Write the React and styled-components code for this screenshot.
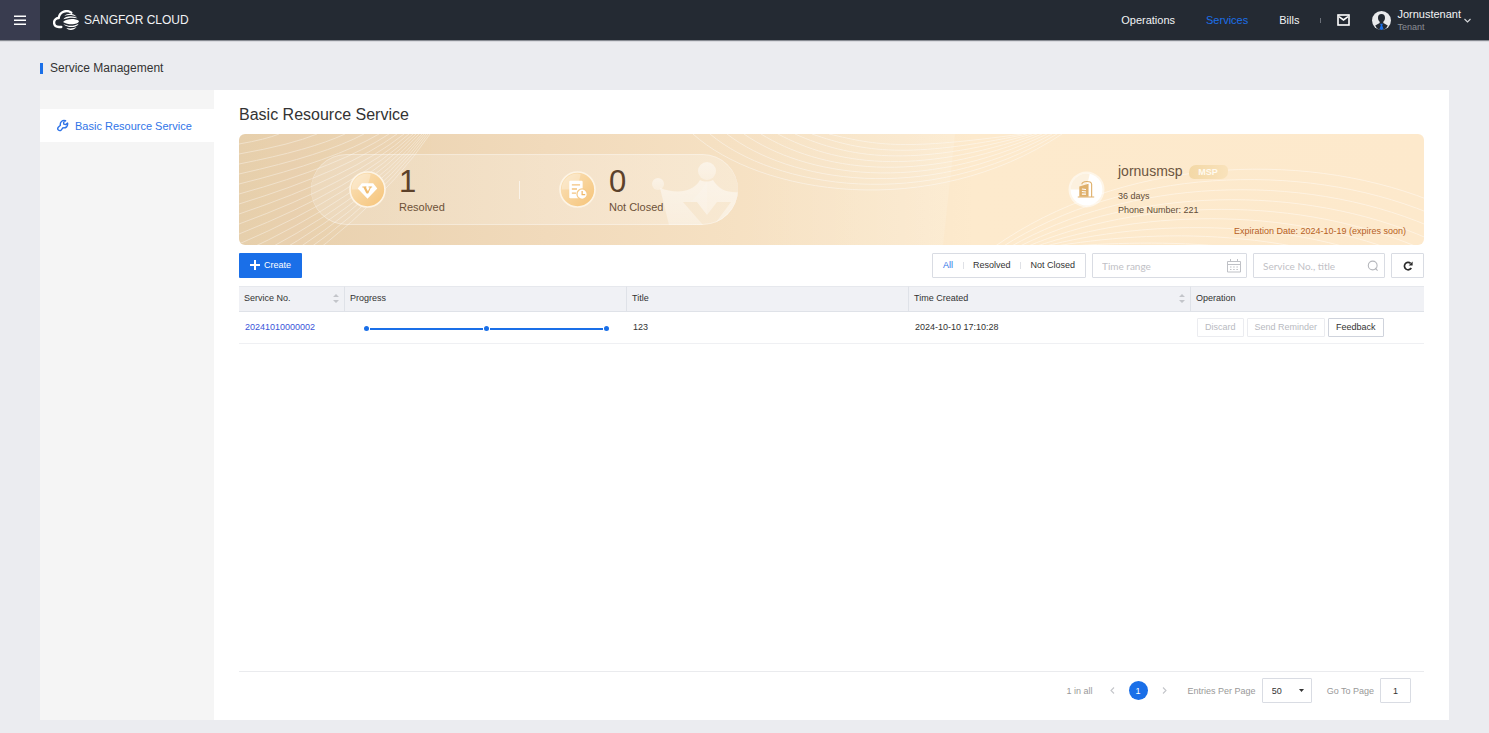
import React from "react";
import styled, { createGlobalStyle } from "styled-components";

const GlobalStyle = createGlobalStyle`
  *, *::before, *::after { box-sizing: border-box; }
  html, body { margin: 0; padding: 0; }
  body {
    background: #ebecf0;
    color: #333;
    font-family: "Liberation Sans", Arial, sans-serif;
    font-size: 9px;
  }
  button, input, select { font-family: inherit; font-size: inherit; margin: 0; }
`;

const Page = styled.div`
  min-height: 100vh;
  display: flex;
  flex-direction: column;
`;

/* ---------- header ---------- */

const Header = styled.header`
  height: 40px;
  flex: none;
  display: flex;
  align-items: center;
  background: #242a33;
  box-shadow: 0 1px 1px rgba(36, 42, 51, 0.5);
`;

const MenuButton = styled.button`
  width: 40px;
  height: 40px;
  display: flex;
  align-items: center;
  justify-content: center;
  padding: 0;
  border: 0;
  background: #393c4f;
`;

const Brand = styled.a`
  display: flex;
  align-items: center;
  gap: 5px;
  margin-left: 13px;
  color: #f2f3f5;
  font-size: 12px;
  line-height: 16px;
  text-decoration: none;
`;

const Nav = styled.nav`
  display: flex;
  align-items: center;
  gap: 31px;
  margin-left: auto;
`;

const NavLink = styled.a`
  color: ${(p) => (p.$active ? "#1c6fe8" : "#f2f3f5")};
  font-size: 11px;
  line-height: 16px;
  text-decoration: none;
`;

const NavDivider = styled.span`
  width: 1px;
  height: 5px;
  margin: 0 16px 0 21px;
  background: #6b7079;
`;

const IconButton = styled.button`
  display: flex;
  padding: 0;
  border: 0;
  background: none;
  color: inherit;
`;

const UserButton = styled.button`
  display: flex;
  align-items: center;
  gap: 6px;
  margin: 0 18px 0 22px;
  padding: 0;
  border: 0;
  background: none;
  text-align: left;
`;

const UserText = styled.span`
  display: flex;
  flex-direction: column;
  margin-right: -3px;
`;

const UserName = styled.span`
  color: #f2f3f5;
  font-size: 11px;
  line-height: 13px;
`;

const UserRole = styled.span`
  color: #8b8e94;
  font-size: 9px;
  line-height: 12px;
`;

/* ---------- page frame ---------- */

const PageTitle = styled.h1`
  display: flex;
  align-items: center;
  gap: 7px;
  height: 50px;
  margin: 0 40px;
  padding-top: 6px;
  color: #333;
  font-size: 12px;
  font-weight: 400;

  &::before {
    content: "";
    width: 3px;
    height: 11px;
    background: #1a6fe8;
  }
`;

const Panel = styled.div`
  flex: 1;
  display: flex;
  margin: 0 40px 13px;
  background: #fff;
`;

const Sidebar = styled.aside`
  flex: none;
  width: 174px;
  padding-top: 19px;
  background: #f5f5f5;
`;

const SideLink = styled.a`
  display: flex;
  align-items: center;
  gap: 6px;
  height: 33px;
  padding-left: 16px;
  background: #fff;
  color: #2f74e8;
  font-size: 11px;
  text-decoration: none;
`;

const Content = styled.main`
  flex: 1;
  min-width: 0;
  display: flex;
  flex-direction: column;
  padding: 16px 25px 17px;
`;

const Heading = styled.h2`
  margin: 0 0 10px;
  color: #333;
  font-size: 16px;
  font-weight: 400;
  line-height: 18px;
`;

/* ---------- banner ---------- */

const Banner = styled.section`
  position: relative;
  flex: none;
  display: flex;
  align-items: center;
  justify-content: space-between;
  height: 111px;
  padding-left: 72px;
  overflow: hidden;
  border-radius: 6px;
  background: linear-gradient(90deg, #e7cfac 0%, #f1dabb 26%, #fae7ca 56%, #fdeacd 62%, #fde9cc 100%);
`;

const BannerArt = styled.svg`
  position: absolute;
  inset: 0;
  width: 100%;
  height: 100%;
`;

const StatPill = styled.div`
  position: relative;
  display: flex;
  align-items: center;
  width: 427px;
  height: 71px;
  padding-left: 38px;
  overflow: hidden;
  border-radius: 36px;
  background: linear-gradient(90deg, rgba(255, 255, 255, 0.16), rgba(255, 255, 255, 0.26));
  box-shadow: inset 0 1px 0 rgba(255, 255, 255, 0.35), inset 0 -1px 0 rgba(255, 255, 255, 0.35);
`;

const Crown = styled.svg`
  position: absolute;
  right: 0;
  bottom: 0;
`;

const Stat = styled.div`
  position: relative;
  flex: none;
  display: flex;
  align-items: center;
  gap: 13px;
  width: 170px;
`;

const StatDivider = styled.span`
  flex: none;
  width: 1px;
  height: 18px;
  margin-right: 39px;
  background: rgba(255, 255, 255, 0.6);
`;

const StatText = styled.div`
  display: flex;
  flex-direction: column;
  color: #6d5138;
  font-size: 11px;
  line-height: 14px;
  padding-bottom: 3px;
`;

const StatValue = styled.strong`
  color: #5c412a;
  font-size: 31px;
  font-weight: 400;
  line-height: 37px;
`;

const Provider = styled.div`
  position: relative;
  display: flex;
  align-self: stretch;
  gap: 13px;
  width: 356px;
  padding: 29px 18px 8px 0;
`;

const ProviderIcon = styled.svg`
  flex: none;
  margin-top: 8px;
`;

const ProviderInfo = styled.div`
  flex: 1;
  display: flex;
  flex-direction: column;
  color: #5f4c38;
  line-height: 14px;
`;

const ProviderName = styled.div`
  display: flex;
  align-items: center;
  gap: 6px;
  margin-bottom: 9px;
  color: #6b5540;
  font-size: 14px;
  line-height: 17px;
`;

const Tag = styled.span`
  width: 39px;
  height: 14px;
  border-radius: 7px 5px 7px 5px;
  background: linear-gradient(90deg, #f3d8a6, #f9e2bb);
  color: #fffaf0;
  font-size: 9px;
  font-weight: 700;
  line-height: 14px;
  text-align: center;
`;

const Expiry = styled.div`
  margin-top: auto;
  color: #b5601f;
  line-height: 12px;
  text-align: right;
`;

/* ---------- toolbar ---------- */

const Toolbar = styled.div`
  display: flex;
  gap: 6px;
  margin: 8px 0;
`;

const CreateButton = styled.button`
  display: flex;
  align-items: center;
  justify-content: center;
  gap: 4px;
  width: 63px;
  height: 25px;
  margin-right: auto;
  padding: 0 0 1px;
  border: 0;
  border-radius: 1px;
  background: #1a6fe8;
  color: #fff;
`;

const FilterGroup = styled.div`
  display: flex;
  align-items: center;
  height: 25px;
  padding-bottom: 1px;
  border: 1px solid #d9dce3;
  border-radius: 1px;
`;

const FilterButton = styled.button`
  padding: 0 10px;
  border: 0;
  background: none;
  color: ${(p) => (p.$active ? "#2f74e8" : "#333")};
  line-height: 12px;

  & + & {
    background: linear-gradient(#dfe1e6, #dfe1e6) left center / 1px 7px no-repeat;
  }
`;

const Field = styled.label`
  display: flex;
  align-items: center;
  width: ${(p) => p.$width}px;
  height: 25px;
  padding: 0 5px 0 9px;
  border: 1px solid #d9dce3;
  border-radius: 1px;
`;

const FieldInput = styled.input`
  flex: 1;
  min-width: 0;
  padding: 0;
  border: 0;
  outline: 0;
  background: none;
  font-family: Lato, "Liberation Sans", sans-serif;
  font-size: 10px;

  &::placeholder { color: #bfc1c6; opacity: 1; }
`;

const RefreshButton = styled.button`
  display: flex;
  align-items: center;
  justify-content: center;
  width: 33px;
  height: 25px;
  padding: 0;
  border: 1px solid #d9dce3;
  border-radius: 1px;
  background: #fff;
`;

/* ---------- table ---------- */

const Table = styled.table`
  width: 100%;
  border-collapse: separate;
  border-spacing: 0;
  table-layout: fixed;
  color: #333;
`;

const Col = styled.col`
  width: ${(p) => (p.$width ? `${p.$width}px` : "auto")};
`;

const Th = styled.th`
  height: 26px;
  padding: 0 5px 2px;
  border-top: 1px solid #e6e8ed;
  border-bottom: 1px solid #dfe2e8;
  border-right: 1px solid #dfe2e8;
  background: #f0f1f5;
  font-weight: 400;
  text-align: left;

  &:last-child { border-right: 0; }
`;

const ThInner = styled.div`
  display: flex;
  align-items: center;
  justify-content: space-between;
`;

const Td = styled.td`
  height: 32px;
  padding: 0 6px 1px;
  border-bottom: 1px solid #eff0f3;
`;

const ServiceLink = styled.a`
  color: #3a55d9;
  text-decoration: none;
`;

const Progress = styled.div`
  display: flex;
  align-items: center;
  gap: 1px;
  padding: 3px 12px 0 13px;
`;

const Dot = styled.span`
  width: 5px;
  height: 5px;
  border-radius: 50%;
  background: #1a6fe8;
`;

const Line = styled.span`
  flex: 1;
  height: 2px;
  margin-top: 1px;
  background: #1a6fe8;
`;

const RowActions = styled.div`
  display: flex;
  gap: 3px;
`;

const RowButton = styled.button`
  height: 19px;
  padding: 0 7px;
  border: 1px solid #cfd3dc;
  border-radius: 1px;
  background: #fff;
  color: #333;
  line-height: 12px;
  white-space: nowrap;

  &:disabled { border-color: #ebecf0; color: #b8babf; }
`;

/* ---------- pagination ---------- */

const Pager = styled.footer`
  display: flex;
  align-items: center;
  justify-content: flex-end;
  margin-top: auto;
  padding: 6px 13px 0 0;
  border-top: 1px solid #eaebee;
  color: #999;
`;

const PageArrow = styled.button`
  display: flex;
  padding: 0;
  border: 0;
  background: none;
`;

const PageNumber = styled.button`
  width: 19px;
  height: 19px;
  margin: 0 13px;
  padding: 0;
  border: 0;
  border-radius: 50%;
  background: #1a6fe8;
  color: #fff;
`;

const Total = styled.span`
  margin-right: 16px;
`;

const PagerLabel = styled.label`
  display: flex;
  align-items: center;
  gap: 6px;
  margin-left: ${(p) => p.$space}px;
`;

const SelectBox = styled.span`
  position: relative;
  display: flex;
  align-items: center;

  & > svg { position: absolute; right: 8px; pointer-events: none; }
`;

const PageSize = styled.select`
  appearance: none;
  width: 50px;
  height: 25px;
  padding: 0 9px;
  border: 1px solid #d9dce3;
  border-radius: 1px;
  background: #fff;
  color: #333;
`;

const PageInput = styled.input`
  width: 31px;
  height: 25px;
  padding: 0;
  border: 1px solid #d9dce3;
  border-radius: 1px;
  color: #333;
  text-align: center;
`;

/* ---------- icons ---------- */

const MenuIcon = () => (
  <svg width="12" height="11" viewBox="0 0 12 11" stroke="#fff" strokeWidth="1.5">
    <path d="M0 1.2h12M0 5.2h12M0 9.2h12" />
  </svg>
);

const Logo = () => (
  <svg width="26" height="20" viewBox="0 0 78 60" fill="none">
    <path
      d="M25 51H18C-2 50-1 25 17 24C20 4 42-2 55 8"
      stroke="#fff"
      strokeWidth="7"
      strokeLinecap="round"
    />
    <path d="M34 18C43 8 62 9 71 20C60 15 45 13 34 18Z" fill="#fff" />
    <path d="M31 28C37 17 62 16 74 25C62 22 46 22 31 28Z" fill="#fff" />
    <path d="M30 36C43 25 66 25 78 33C76 44 47 47 30 36Z" fill="#fff" />
    <path d="M31 42C46 50 65 48 77 41C72 53 44 56 31 42Z" fill="#fff" />
    <path d="M40 54C52 57 63 55 71 51C62 62 47 62 40 54Z" fill="#fff" />
  </svg>
);

const WrenchIcon = () => (
  <svg width="13" height="13" viewBox="0 0 13 13" fill="none" stroke="currentColor" strokeWidth="1.4" strokeLinejoin="round">
    <path d="M9.600 1.700L7.600 3.200l.2 1.900 1.900.5 1.900-1.500c.5 3.300-1.700 5.200-4.600 4.700L5.300 10.900c-2 1.800-4.700-.6-3-2.600L4.400 6.300C3.700 3.200 6.300.6 9.600 1.700z" />
  </svg>
);

const MailIcon = () => (
  <svg width="13" height="12" viewBox="0 0 13 12" fill="none" stroke="#fff" strokeWidth="1.6">
    <rect x="1" y="1" width="11" height="10" />
    <path d="M2 2.6l4.5 3.4L11 2.6" />
  </svg>
);

const Avatar = () => (
  <svg width="19" height="19" viewBox="0 0 19 19">
    <circle cx="9.5" cy="9.5" r="9.5" fill="#e9eaec" />
    <path
      d="M9.500 3c-2.300 0-3.600 1.600-3.500 3.900.1 1.600.7 2.900 1.700 3.800v1.300L3.200 14.400c1.200 2.900 3.800 4.600 6.300 4.600s5.100-1.700 6.300-4.600L11.300 12v-1.300c1-.9 1.600-2.200 1.700-3.800.1-2.300-1.200-3.900-3.500-3.900z"
      fill="#242a33"
    />
    <path d="M8 12.800h3l-.8 1.700 1.300 3.500-2 1-2-1 1.300-3.500z" fill="#1a6fe8" />
  </svg>
);

const Chevron = ({ d, color = "#c4c6ca" }) => (
  <svg width="7" height="7" viewBox="0 0 7 7" fill="none" stroke={color} strokeWidth="1.1">
    <path d={d} />
  </svg>
);

const PlusIcon = () => (
  <svg width="10" height="10" viewBox="0 0 10 10" stroke="#fff" strokeWidth="2">
    <path d="M5 0v10M0 5h10" />
  </svg>
);

const CalendarIcon = () => (
  <svg width="14" height="14" viewBox="0 0 14 14" fill="none" stroke="#bfc1c6">
    <path d="M.5 2.500h13v10.500H.5zM.5 5.500h13M3.500 0v3M10.500 0v3" />
    <path d="M3 8h8M3 10.500h8" strokeDasharray="1.500 1.700" />
  </svg>
);

const SearchIcon = () => (
  <svg width="12" height="12" viewBox="0 0 12 12" fill="none" stroke="#b5b7bc" strokeWidth="1.1">
    <circle cx="5.7" cy="5.5" r="4.4" />
    <path d="M8 8l2.600 2.600" />
  </svg>
);

const RefreshIcon = () => (
  <svg width="10" height="10" viewBox="0 0 10 10">
    <path d="M8.300 7A3.700 3.700 0 1 1 7.600 2.300" fill="none" stroke="#2b2b2b" strokeWidth="1.7" />
    <path d="M9.600.4v4H5.600z" fill="#2b2b2b" />
  </svg>
);

const SortIcon = () => (
  <svg width="6" height="9" viewBox="0 0 6 9" fill="#c3c5ca">
    <path d="M3 0l3 3H0zM3 9l3-3H0z" />
  </svg>
);

const CaretIcon = () => (
  <svg width="5" height="3" viewBox="0 0 5 3">
    <path d="M0 0h5L2.500 3z" fill="#333" />
  </svg>
);

const Medal = ({ id, children }) => (
  <svg width="37" height="37" viewBox="0 0 36 36">
    <defs>
      <linearGradient id={id} x1="0" y1="0" x2="1" y2="1">
        <stop offset="0" stopColor="#fae3bd" />
        <stop offset="1" stopColor="#f6c377" />
      </linearGradient>
    </defs>
    <circle cx="18" cy="18" r="17" fill={`url(#${id})`} stroke="#fdf4e5" strokeWidth="1.6" />
    <path d="M18 2.500A15.500 15.500 0 0 0 2.500 18H14c4-2 6-9 7-15.200z" fill="#fff" opacity=".3" />
    {children}
  </svg>
);

const DiamondGlyph = () => (
  <g>
    <path d="M12.500 12h11l4 5-9.500 10L8.500 17z" fill="#fff" />
    <path d="M13 15.500h4M19 15.500h3.500" stroke="#f0bb6e" strokeWidth="1" />
    <path d="M15 15.500l3 6" stroke="#f0bb6e" strokeWidth="2.2" />
    <path d="M18 22l3-6.500" stroke="#f0bb6e" strokeWidth="1.1" />
  </g>
);

const TicketGlyph = () => (
  <g>
    <rect x="10" y="9.5" width="13" height="17" rx="1" fill="#fff" />
    <path d="M12.500 13.500h8M12.500 17.500h5M12.500 21.500h4" stroke="#f3c27d" strokeWidth="1.3" />
    <circle cx="22.5" cy="22.5" r="5" fill="#fff" stroke="#f6ca88" strokeWidth="1.2" />
    <path d="M22.500 19.500v3.500h3" stroke="#f0b868" strokeWidth="1.2" fill="none" />
  </g>
);

const BuildingBadge = () => (
  <ProviderIcon width="37" height="37" viewBox="0 0 36 36">
    <circle cx="18" cy="18" r="17.5" fill="#fff" opacity=".55" />
    <circle cx="18" cy="18" r="15.5" fill="#fff" />
    <path d="M18 2.500A15.500 15.500 0 0 0 2.500 18H14c4-2 6-9 7-15.200z" fill="#fcf1df" />
    <path d="M11 15l9-2.500V25h-9z" fill="#dfb06b" />
    <path d="M13.500 17.500l4 .5M13.500 20l4 .5M13.500 22.500h4" stroke="#fff" strokeWidth="1" />
    <path d="M13.500 13c0-3.500 9.500-4 9.500 0v12M9.500 25.300h16" fill="none" stroke="#dfb06b" strokeWidth="1.1" />
  </ProviderIcon>
);

const range = (n) => Array.from({ length: n }, (_, i) => i);
const LEFT_TOPS = [40, 78, 106, 125, 140, 150, 158, 165, 170, 174, 177, 180, 183, 185, 187, 189, 191];

const Waves = () => (
  <BannerArt viewBox="0 0 1185 111" preserveAspectRatio="xMidYMid slice" fill="none" stroke="#fff">
    <defs>
      <linearGradient id="sheen" x1="0" x2="1">
        <stop offset="0" stopColor="#fff" stopOpacity="0" />
        <stop offset="1" stopColor="#fff" stopOpacity=".13" />
      </linearGradient>
    </defs>
    <path d="M500 0H716L704 111H500z" fill="url(#sheen)" stroke="none" />
    <g opacity=".36">
      {LEFT_TOPS.map((x, i) => {
        const y = 10 + i * 10;
        return <path key={x} d={`M0 ${y}Q${x * 0.68} ${y * 0.53} ${x} 0`} />;
      })}
    </g>
    <g opacity=".42">
      {range(9).map((i) => (
        <path
          key={i}
          d={`M${454 + 17 * i} 0C${520 + 15 * i} ${60 - 6 * i} ${690 - 3 * i} ${88 - 9 * i} ${823 - 5 * i} 0`}
        />
      ))}
    </g>
    <g opacity=".42">
      {range(9).map((i) => (
        <path
          key={i}
          d={`M${755 + 8 * i} 113C${880 + 5 * i} ${25 + 10 * i} 1060 ${15 + 11 * i} 1190 ${66 + 13 * i}`}
        />
      ))}
    </g>
  </BannerArt>
);

const CrownArt = () => (
  <Crown width="86" height="63" viewBox="0 0 86 63">
    <defs>
      <linearGradient id="crown" x1="0" y1="0" x2="0" y2="1">
        <stop offset="0" stopColor="#fff" stopOpacity=".5" />
        <stop offset="1" stopColor="#fff" stopOpacity=".3" />
      </linearGradient>
    </defs>
    <g fill="url(#crown)">
      <circle cx="55" cy="9" r="9" />
      <circle cx="6" cy="22" r="6" />
      <path
        fillRule="evenodd"
        d="M8 26C22 31 40 32 48 18C52 20 57 20 61 18C67 28 76 31 88 30V63H17zM31 40H45L55 53L65 40H79L62 63H51z"
      />
    </g>
    <path d="M55 19C50 28 45 34 38 40H45L55 53z" fill="#fff" opacity=".12" />
  </Crown>
);

const App = () => (
  <>
    <GlobalStyle />
    <Page>
      <Header>
        <MenuButton aria-label="Menu"><MenuIcon /></MenuButton>
        <Brand href="#"><Logo />SANGFOR CLOUD</Brand>
        <Nav>
          <NavLink href="#">Operations</NavLink>
          <NavLink href="#" $active>Services</NavLink>
          <NavLink href="#">Bills</NavLink>
        </Nav>
        <NavDivider />
        <IconButton aria-label="Messages"><MailIcon /></IconButton>
        <UserButton>
          <Avatar />
          <UserText>
            <UserName>Jornustenant</UserName>
            <UserRole>Tenant</UserRole>
          </UserText>
          <Chevron d="M.5 2l3 3 3-3" color="#d5d7da" />
        </UserButton>
      </Header>

      <PageTitle>Service Management</PageTitle>

      <Panel>
        <Sidebar>
          <SideLink href="#"><WrenchIcon />Basic Resource Service</SideLink>
        </Sidebar>
        <Content>
          <Heading>Basic Resource Service</Heading>

          <Banner>
            <Waves />
            <StatPill>
              <CrownArt />
              <Stat>
                <Medal id="medal-resolved"><DiamondGlyph /></Medal>
                <StatText><StatValue>1</StatValue>Resolved</StatText>
              </Stat>
              <StatDivider />
              <Stat>
                <Medal id="medal-open"><TicketGlyph /></Medal>
                <StatText><StatValue>0</StatValue>Not Closed</StatText>
              </Stat>
            </StatPill>
            <Provider>
              <BuildingBadge />
              <ProviderInfo>
                <ProviderName>jornusmsp<Tag>MSP</Tag></ProviderName>
                <span>36 days</span>
                <span>Phone Number: 221</span>
                <Expiry>Expiration Date: 2024-10-19 (expires soon)</Expiry>
              </ProviderInfo>
            </Provider>
          </Banner>

          <Toolbar>
            <CreateButton><PlusIcon />Create</CreateButton>
            <FilterGroup>
              <FilterButton $active>All</FilterButton>
              <FilterButton>Resolved</FilterButton>
              <FilterButton>Not Closed</FilterButton>
            </FilterGroup>
            <Field $width={155}>
              <FieldInput aria-label="Time range" placeholder="Time range" />
              <CalendarIcon />
            </Field>
            <Field $width={132}>
              <FieldInput aria-label="Service No., title" placeholder="Service No., title" />
              <SearchIcon />
            </Field>
            <RefreshButton aria-label="Refresh"><RefreshIcon /></RefreshButton>
          </Toolbar>

          <Table>
            <colgroup>
              <Col $width={106} />
              <Col />
              <Col />
              <Col />
              <Col $width={233} />
            </colgroup>
            <thead>
              <tr>
                <Th><ThInner>Service No.<SortIcon /></ThInner></Th>
                <Th>Progress</Th>
                <Th>Title</Th>
                <Th><ThInner>Time Created<SortIcon /></ThInner></Th>
                <Th>Operation</Th>
              </tr>
            </thead>
            <tbody>
              <tr>
                <Td><ServiceLink href="#">20241010000002</ServiceLink></Td>
                <Td><Progress><Dot /><Line /><Dot /><Line /><Dot /></Progress></Td>
                <Td>123</Td>
                <Td>2024-10-10 17:10:28</Td>
                <Td>
                  <RowActions>
                    <RowButton disabled>Discard</RowButton>
                    <RowButton disabled>Send Reminder</RowButton>
                    <RowButton>Feedback</RowButton>
                  </RowActions>
                </Td>
              </tr>
            </tbody>
          </Table>

          <Pager>
            <Total>1 in all</Total>
            <PageArrow aria-label="Previous page"><Chevron d="M5 .5l-3 3 3 3" /></PageArrow>
            <PageNumber>1</PageNumber>
            <PageArrow aria-label="Next page"><Chevron d="M2 .5l3 3-3 3" /></PageArrow>
            <PagerLabel $space={20}>
              Entries Per Page
              <SelectBox>
                <PageSize defaultValue="50">
                  <option>20</option>
                  <option>50</option>
                  <option>100</option>
                </PageSize>
                <CaretIcon />
              </SelectBox>
            </PagerLabel>
            <PagerLabel $space={15}>
              Go To Page
              <PageInput defaultValue="1" />
            </PagerLabel>
          </Pager>
        </Content>
      </Panel>
    </Page>
  </>
);

export default App;
